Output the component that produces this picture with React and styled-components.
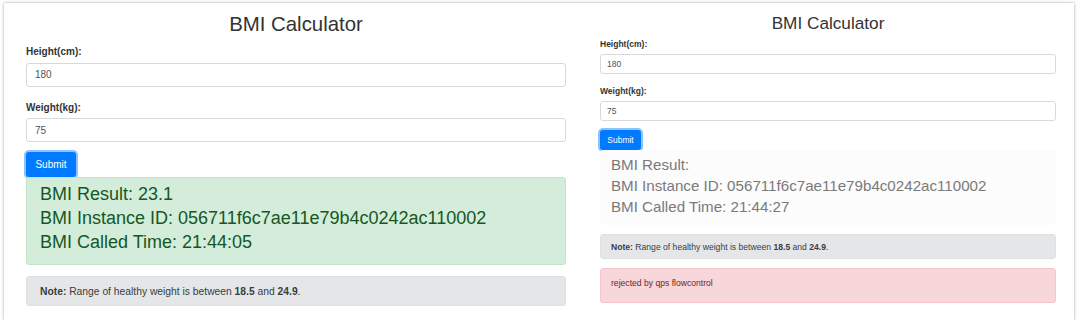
import React from 'react';
import styled, { createGlobalStyle } from 'styled-components';

const Global = createGlobalStyle`
  html, body { margin: 0; padding: 0; background: #fff; }
  body { font-family: "Liberation Sans", Arial, sans-serif; }
  * { box-sizing: border-box; }
`;

const Frame = styled.div`
  margin: 3px 0 0 4px;
  width: 1070px;
  height: 317px;
  box-shadow: 0 0 3px rgba(0, 0, 0, 0.35);
  display: flex;
  align-items: flex-start;
  gap: 34px;
  padding: 0 18px 0 22px;
`;

const Panel = styled.div`
  width: ${p => p.$z.width}px;
  padding-top: ${p => p.$z.padTop}px;
  display: flex;
  flex-direction: column;
`;

const Title = styled.h1`
  margin: 0 0 ${p => p.$z.titleGap}px;
  text-align: center;
  font-weight: 400;
  font-size: ${p => p.$z.titleFont}px;
  line-height: ${p => p.$z.titleLH}px;
  color: #333;
`;

const Group = styled.div`
  display: flex;
  flex-direction: column;
  margin-bottom: ${p => p.$gap}px;
`;

const Label = styled.label`
  font-weight: 700;
  font-size: ${p => p.$z.labelFont}px;
  line-height: ${p => p.$z.labelLH}px;
  color: #333;
  margin-bottom: ${p => p.$z.labelGap}px;
`;

const Input = styled.input`
  width: 100%;
  height: ${p => p.$z.inputH}px;
  border: 1px solid #d9d9d9;
  border-radius: 3px;
  padding: 0 ${p => p.$z.inputPad}px;
  font-family: inherit;
  font-size: ${p => p.$z.inputFont}px;
  color: #555;
  background: #fff;
  outline: none;
`;

const Button = styled.button`
  align-self: flex-start;
  width: ${p => p.$z.btnW}px;
  height: ${p => p.$z.btnH}px;
  padding: 0;
  border: none;
  border-radius: 3px;
  background: #007bff;
  color: #fff;
  font-family: inherit;
  font-size: ${p => p.$z.btnFont}px;
  box-shadow: 0 0 0 2px rgba(0, 123, 255, 0.45);
`;

const Result = styled.div`
  padding: ${p => p.$z.resultPad};
  font-size: ${p => p.$z.resultFont}px;
  line-height: ${p => p.$z.resultLH}px;
  border-radius: 3px;
  border: 1px solid ${p => (p.$ok ? '#c3e6cb' : '#fcfcfc')};
  background: ${p => (p.$ok ? '#d4edda' : '#fcfcfc')};
  color: ${p => (p.$ok ? '#155724' : '#7a7a7a')};
`;

const Alert = styled.div`
  margin-top: ${p => p.$gap}px;
  height: ${p => p.$h}px;
  padding: ${p => p.$pad};
  display: flex;
  align-items: ${p => (p.$top ? 'flex-start' : 'center')};
  font-size: ${p => p.$z.noteFont}px;
  border-radius: 3px;
  border: 1px solid ${p => (p.$danger ? '#f5c6cb' : '#dfe0e2')};
  background: ${p => (p.$danger ? '#f8d7da' : '#e5e6e8')};
  color: ${p => (p.$danger ? '#721c24' : '#383d41')};
  white-space: pre;
`;

const left = {
  width: 540, padTop: 9, titleFont: 20.4, titleLH: 24, titleGap: 8,
  labelFont: 10, labelLH: 15, labelGap: 3.5, inputH: 24, inputFont: 10, inputPad: 8,
  groupGap: 13, btnGap: 10, btnW: 50, btnH: 25, btnFont: 10,
  resultFont: 18, resultLH: 24, resultPad: '4px 13px 10px',
  noteGap: 11, noteH: 30, noteFont: 10.3, notePad: '0 13px',
};

const right = {
  width: 456, padTop: 10, titleFont: 17.2, titleLH: 20, titleGap: 5,
  labelFont: 8.5, labelLH: 13, labelGap: 3, inputH: 20, inputFont: 8.5, inputPad: 6,
  groupGap: 10.5, btnGap: 9, btnW: 41, btnH: 20, btnFont: 8.5,
  resultFont: 15.15, resultLH: 21, resultPad: '3px 10px 7px',
  noteGap: 9.5, noteH: 25, noteFont: 8.6, notePad: '0 10px',
};

function Note({ z }) {
  return (
    <Alert $z={z} $gap={z.noteGap} $h={z.noteH} $pad={z.notePad}>
      <b>Note:</b> Range of healthy weight is between <b>18.5</b> and <b>24.9</b>.
    </Alert>
  );
}

function Calculator({ z, ok, lines, children }) {
  return (
    <Panel $z={z}>
      <Title $z={z}>BMI Calculator</Title>
      <Group $gap={z.groupGap}>
        <Label $z={z}>Height(cm):</Label>
        <Input $z={z} defaultValue="180" />
      </Group>
      <Group $gap={z.btnGap}>
        <Label $z={z}>Weight(kg):</Label>
        <Input $z={z} defaultValue="75" />
      </Group>
      <Button $z={z}>Submit</Button>
      <Result $z={z} $ok={ok}>
        {lines.map(l => (
          <div key={l}>{l}</div>
        ))}
      </Result>
      <Note z={z} />
      {children}
    </Panel>
  );
}

export default function App() {
  return (
    <>
      <Global />
      <Frame>
        <Calculator
          z={left}
          ok
          lines={[
            'BMI Result: 23.1',
            'BMI Instance ID: 056711f6c7ae11e79b4c0242ac110002',
            'BMI Called Time: 21:44:05',
          ]}
        />
        <Calculator
          z={right}
          lines={[
            'BMI Result:',
            'BMI Instance ID: 056711f6c7ae11e79b4c0242ac110002',
            'BMI Called Time: 21:44:27',
          ]}
        >
          <Alert $z={right} $danger $top $gap={8.5} $h={35} $pad="9px 10px 0">
            rejected by qps flowcontrol
          </Alert>
        </Calculator>
      </Frame>
    </>
  );
}
